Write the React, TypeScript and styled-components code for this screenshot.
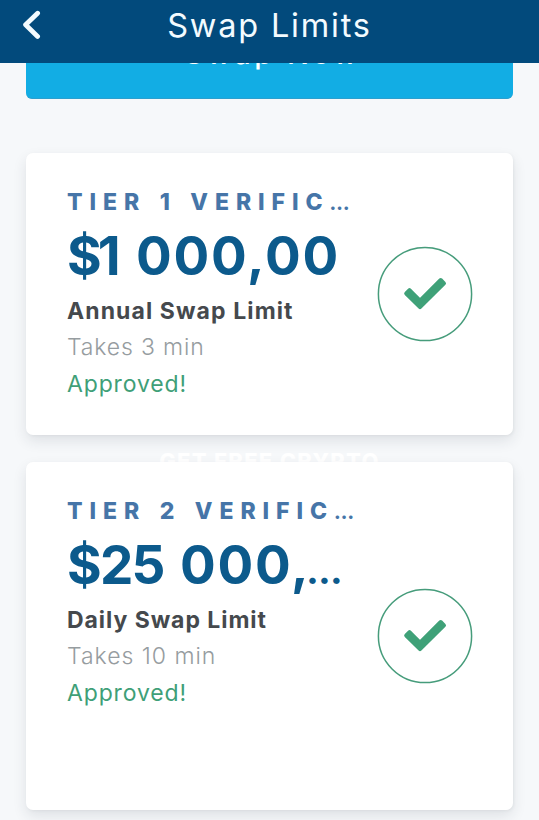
import React from "react";
import styled, { createGlobalStyle } from "styled-components";

const GlobalStyle = createGlobalStyle`
  * { box-sizing: border-box; }
  body { margin: 0; background: #f6f8fa; font-family: Inter, "Open Sans", sans-serif; }
`;

const Screen = styled.div`
  height: 820px;
  overflow: hidden;
  display: flex;
  flex-direction: column;
  background: #f6f8fa;
`;

const Header = styled.header`
  flex: none;
  height: 63px;
  display: grid;
  grid-template-columns: 62px 1fr 62px;
  background: #024a7c;
  color: #f3fbff;
`;

const BackButton = styled.button`
  display: flex;
  align-items: flex-start;
  border: 0;
  padding: 10px 0 0 22px;
  background: none;
`;

const Title = styled.h1`
  margin: 6px 0 0;
  text-align: center;
  font-size: 32.5px;
  line-height: 40px;
  font-weight: 400;
  letter-spacing: 1.8px;
  white-space: nowrap;
`;

const Content = styled.main`
  flex: 1;
  min-height: 0;
  overflow: hidden;
  display: flex;
  flex-direction: column;
  padding: 0 26px;
`;

const SwapButton = styled.button`
  flex: none;
  height: 86px;
  margin: -50px 0 54px;
  padding: 0 0 4px 6px;
  border: 0;
  border-bottom: 1px solid #2c9fce;
  border-radius: 6px;
  background: #12ade4;
  color: #fff;
  font: 500 29px/32px Inter, sans-serif;
  letter-spacing: 3.5px;
`;

const Card = styled.section<{ $height: number }>`
  flex: none;
  position: relative;
  height: ${(p) => p.$height}px;
  display: flex;
  align-items: center;
  justify-content: space-between;
  padding: 0 40px 0 41px;
  border-radius: 7px;
  background: #fff;
  box-shadow: 0 6px 14px rgba(40, 50, 60, 0.11), 1px 1px 3px rgba(40, 50, 60, 0.05);
`;

const Details = styled.div`
  align-self: flex-start;
  padding-top: 35px;
  width: 300px;
  white-space: nowrap;
`;

type Tracking = { $track: number };

const Tier = styled.div`
  font-size: 23px;
  line-height: 28px;
  font-weight: 800;
  color: #4675a8;
  letter-spacing: 6.95px;
  word-spacing: 1.5px;
`;

const Dots = styled.span`
  letter-spacing: 0;
  font-size: 19px;
`;

const Amount = styled.div<{ $words: number }>`
  margin-top: 6px;
  height: 64px;
  font-size: 53px;
  line-height: 64px;
  font-weight: 700;
  color: #0c5a8c;
  letter-spacing: 1.8px;
  word-spacing: ${(p) => p.$words}px;
`;

const Lead = styled.span<Tracking>`
  letter-spacing: ${(p) => p.$track}px;
`;

const AmountDots = styled.span`
  margin-left: -4px;
  font-size: 32px;
  line-height: 1;
  font-weight: 900;
  letter-spacing: 0;
`;

const Limit = styled.div<Tracking>`
  margin-top: 5px;
  font-size: 23px;
  line-height: 36px;
  font-weight: 650;
  color: #45494d;
  letter-spacing: ${(p) => p.$track}px;
`;

const Note = styled.div<Tracking & { $approved?: boolean }>`
  font-size: 23px;
  line-height: 36.5px;
  font-weight: ${(p) => (p.$approved ? 400 : 350)};
  color: ${(p) => (p.$approved ? "#3f9f78" : "#969ca0")};
  letter-spacing: ${(p) => p.$track}px;
`;

const Promo = styled.div`
  flex: none;
  height: 27px;
  padding-top: 13px;
  text-align: center;
  font-size: 22px;
  line-height: 27px;
  font-weight: 800;
  letter-spacing: 1.3px;
  color: #fff;
`;

const Badge = styled.svg`
  flex: none;
  width: 96px;
  height: 96px;
`;

function ApprovedBadge() {
  return (
    <Badge viewBox="0 0 96 96" fill="none">
      <circle cx="48" cy="48" r="46.6" stroke="#469c7b" strokeWidth="1.5" />
      <path
        d="M29.2 47.5 32.5 44.2 43 54.7 63.7 34 67 37.3 43 61.2Z"
        fill="#3fa178"
        stroke="#3fa178"
        strokeWidth="4"
        strokeLinejoin="round"
      />
    </Badge>
  );
}

export default function App() {
  return (
    <Screen>
      <GlobalStyle />
      <Header>
        <BackButton aria-label="Back">
          <svg width="20" height="30" viewBox="0 0 20 30" fill="none">
            <path d="M15.6 3.2 3.6 14.8 15.6 26.4" stroke="#f3fbff" strokeWidth="4.8" strokeLinecap="round" strokeLinejoin="round" />
          </svg>
        </BackButton>
        <Title>Swap Limits</Title>
      </Header>
      <Content>
        <SwapButton>Swap Now</SwapButton>
        <Card $height={282}>
          <Details>
            <Tier>TIER 1 VERIFIC<Dots>…</Dots></Tier>
            <Amount $words={5}><Lead $track={-4}>$1</Lead> 000,00</Amount>
            <Limit $track={1.1}>Annual Swap Limit</Limit>
            <Note $track={0.85}>Takes 3 min</Note>
            <Note $track={0.85} $approved>Approved!</Note>
          </Details>
          <ApprovedBadge />
        </Card>
        <Promo>GET FREE CRYPTO</Promo>
        <Card $height={348}>
          <Details>
            <Tier>TIER 2 VERIFIC<Dots>…</Dots></Tier>
            <Amount $words={2}><Lead $track={-1.8}>$25</Lead> 000,<AmountDots>…</AmountDots></Amount>
            <Limit $track={0.95}>Daily Swap Limit</Limit>
            <Note $track={0.98}>Takes 10 min</Note>
            <Note $track={0.85} $approved>Approved!</Note>
          </Details>
          <ApprovedBadge />
        </Card>
      </Content>
    </Screen>
  );
}
